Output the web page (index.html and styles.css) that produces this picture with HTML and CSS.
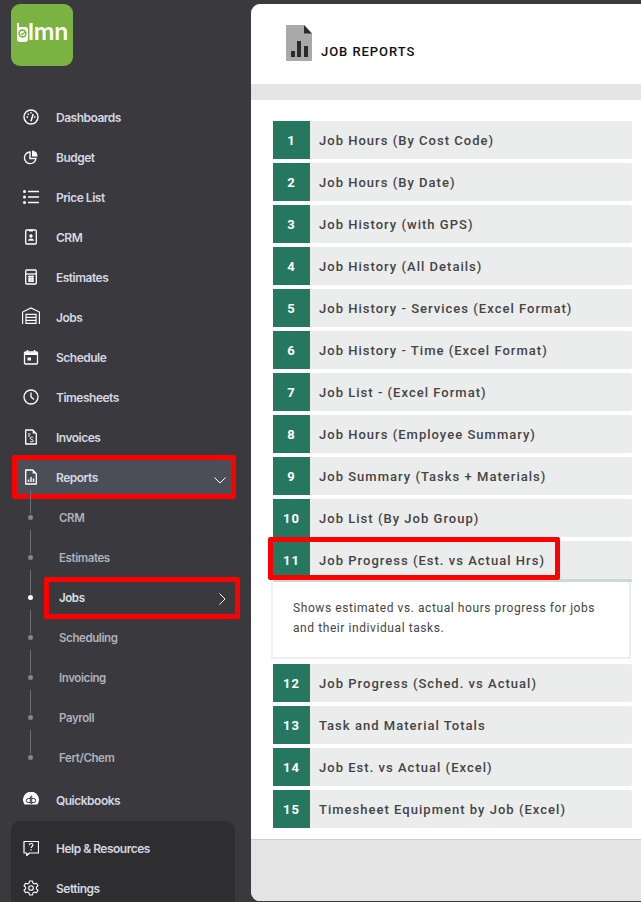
FILE: index.html
```html
<!DOCTYPE html>
<html lang="en">
<head>
<meta charset="utf-8">
<title>Job Reports</title>
<link rel="stylesheet" href="styles.css">
</head>
<body>
<aside class="sidebar">
  <div class="logo">
    <svg class="logo-mark" viewBox="0 0 11 19" width="11" height="19"><path d="M0 0h2v4h6a3 3 0 0 1 3 3v9a3 3 0 0 1-3 3H3a3 3 0 0 1-3-3z" fill="#fff"/><circle cx="5.5" cy="10.5" r="3.4" fill="none" stroke="#7ab342" stroke-width="1.6"/><path d="M4 10.5l1.3 1.2 2.6-2.6" fill="none" stroke="#7ab342" stroke-width="1.2"/></svg>
    <span class="logo-text">lmn</span>
  </div>
  <nav class="nav">
    <a class="item"><svg class="icon" viewBox="0 0 16 16"><circle cx="8" cy="8" r="7" fill="none" stroke="#fff" stroke-width="1.4"/><path d="M8 12.2 10.2 5" stroke="#fff" stroke-width="1.5"/><path d="M3.5 8h1.5M4.8 4.8l1 1M8 3v1.5M12.5 8H11" stroke="#fff" stroke-width="1.3"/></svg><span>Dashboards</span></a>
    <a class="item"><svg class="icon" viewBox="0 0 16 16"><path d="M7 3a5.8 5.8 0 1 0 6 6.5H7z" fill="none" stroke="#fff" stroke-width="1.4"/><path d="M9 1.5a5.8 5.8 0 0 1 5.6 6H9z" fill="#fff"/></svg><span>Budget</span></a>
    <a class="item"><svg class="icon" viewBox="0 0 16 16"><path d="M5 2.5h11M5 8h11M5 13.500h11" stroke="#fff" stroke-width="1.3"/><circle cx="1.500" cy="2.500" r="1.500" fill="#fff"/><circle cx="1.500" cy="8" r="1.500" fill="#fff"/><circle cx="1.500" cy="13.500" r="1.500" fill="#fff"/></svg><span>Price List</span></a>
    <a class="item"><svg class="icon" viewBox="0 0 16 16"><rect x="2.700" y="1" width="10.600" height="14" rx="1" fill="none" stroke="#fff" stroke-width="1.300"/><rect x="6" y="0.500" width="4" height="2" fill="#fff"/><circle cx="8" cy="7" r="1.700" fill="#fff"/><path d="M5 11.800c.4-3 5.600-3 6 0z" fill="#fff"/></svg><span>CRM</span></a>
    <a class="item"><svg class="icon" viewBox="0 0 16 16"><rect x="2.700" y="1" width="10.600" height="14" rx="1" fill="none" stroke="#fff" stroke-width="1.300"/><path d="M3 5h10" stroke="#fff" stroke-width="1.300"/><path d="M5 7.500h6M5 9.800h6M5 12.100h6M6.300 6.500v6.500M8 6.500v6.500M9.700 6.500v6.500" stroke="#fff" stroke-width="1.200"/></svg><span>Estimates</span></a>
    <a class="item"><svg class="icon icon-wide" viewBox="0 0 16 16"><path d="M.5 15V4.500L8 .8l7.500 3.700V15" fill="none" stroke="#fff" stroke-width="1.100"/><path d="M3.500 6.500h9v8h-9z" fill="none" stroke="#fff" stroke-width="1"/><path d="M3.500 9.200h9M3.500 11.900h9" stroke="#fff" stroke-width="1"/></svg><span>Jobs</span></a>
    <a class="item"><svg class="icon" viewBox="0 0 16 16"><path d="M2.500 3h11a1 1 0 0 1 1 1v10a1 1 0 0 1-1 1h-11a1 1 0 0 1-1-1V4a1 1 0 0 1 1-1z" fill="none" stroke="#fff" stroke-width="1.300"/><path d="M1.500 3.500h13V6h-13z" fill="#fff"/><path d="M4.500 1v3M11.500 1v3" stroke="#fff" stroke-width="1.500"/><rect x="4.500" y="8.500" width="3.500" height="3" fill="#fff"/></svg><span>Schedule</span></a>
    <a class="item"><svg class="icon" viewBox="0 0 16 16"><circle cx="8" cy="8" r="7" fill="none" stroke="#fff" stroke-width="1.300"/><path d="M8 3.500V8l3 2.500" fill="none" stroke="#fff" stroke-width="1.300"/></svg><span>Timesheets</span></a>
    <a class="item"><svg class="icon" viewBox="0 0 16 16"><path d="M2.700 1h7l3.600 3.600V15H2.700z" fill="none" stroke="#fff" stroke-width="1.300" stroke-linejoin="round"/><path d="M9.700 1v3.600h3.600" fill="#fff"/><path d="M5 5h2.500M5 7h2" stroke="#fff"/><path d="M10.200 8.700c-.5-.9-3-.9-3 .6 0 1.600 3.100.9 3.100 2.400 0 1.500-2.700 1.400-3.300.4" fill="none" stroke="#fff" stroke-width="1"/></svg><span>Invoices</span></a>
    <a class="item item-active"><svg class="icon" viewBox="0 0 16 16"><path d="M2.700 1h7l3.600 3.600V15H2.700z" fill="none" stroke="#fff" stroke-width="1.300" stroke-linejoin="round"/><path d="M9.700 1v3.600h3.600z" fill="#fff"/><path d="M5.500 10.500v2.500M8 8v5M10.500 9.500v3.500" stroke="#fff" stroke-width="1.400"/></svg><span>Reports</span><svg class="chev" viewBox="0 0 12 7" width="12" height="7"><path d="M.5.500 6 6l5.500-5.500" fill="none" stroke="#fff" stroke-width="1"/></svg></a>
    <div class="subnav">
      <a class="sub"><span>CRM</span></a>
      <a class="sub"><span>Estimates</span></a>
      <a class="sub sub-active"><span>Jobs</span><svg class="chev-right" viewBox="0 0 7 12" width="7" height="12"><path d="M.5.500 6 6 .5 11.500" fill="none" stroke="#fff" stroke-width="1"/></svg></a>
      <a class="sub"><span>Scheduling</span></a>
      <a class="sub"><span>Invoicing</span></a>
      <a class="sub"><span>Payroll</span></a>
      <a class="sub"><span>Fert/Chem</span></a>
    </div>
    <a class="item item-qb"><svg class="icon" viewBox="0 0 16 16"><path d="M1.600 12.500A8 8 0 1 1 14.400 12.500z" fill="#fff"/><path d="M7.300 4.500v7M7.300 6.500H5.300a2 2 0 0 0 0 4h2M8.700 12V3.500M8.700 6.500h2a2 2 0 0 1 0 4h-2" fill="none" stroke="#39393e" stroke-width="1"/></svg><span>Quickbooks</span></a>
  </nav>
  <div class="panel">
    <a class="item"><svg class="icon" viewBox="0 0 16 16"><path d="M1 1.500h14.500v11.500H6.500L3.800 15.500V13H1z" fill="none" stroke="#fff" stroke-width="1.200" stroke-linejoin="round"/><path d="M6.300 5.200c0-2.300 3.600-2.300 3.600-.2 0 1.500-1.800 1.500-1.800 3" fill="none" stroke="#fff" stroke-width="1.100"/><path d="M8.100 9.300v1.300" stroke="#fff" stroke-width="1.200"/></svg><span>Help &amp; Resources</span></a>
    <a class="item"><svg class="icon" viewBox="0 0 16 16"><path d="M6.500 1h3l.4 2 1.600.9 2-.7 1.500 2.600-1.600 1.300v1.800l1.600 1.300-1.500 2.600-2-.7-1.600.9-.4 2h-3l-.4-2-1.600-.9-2 .7L1 10.200l1.600-1.300V7.100L1 5.800l1.500-2.600 2 .7L6.100 3z" fill="none" stroke="#fff" stroke-width="1.100" stroke-linejoin="round"/><circle cx="8" cy="8" r="2.300" fill="none" stroke="#fff" stroke-width="1.100"/></svg><span>Settings</span></a>
  </div>
</aside>
<main class="main">
  <header class="header">
    <svg class="doc" viewBox="0 0 26 36" width="26" height="36"><path d="M1 0h17l8 8.500V35a1 1 0 0 1-1 1H1a1 1 0 0 1-1-1V1a1 1 0 0 1 1-1z" fill="#a9a9a9"/><path d="M18 0l8 8.500h-8z" fill="#2b2b2d"/><path d="M5 26h4v6H5zM11 16h4v16h-4zM18 21h4v11h-4z" fill="#2b2b2d"/></svg>
    <h1 class="title">JOB REPORTS</h1>
  </header>
  <div class="band"></div>
  <section class="reports">
    <div class="row"><b class="num">1</b><span class="label">Job Hours (By Cost Code)</span></div>
    <div class="row"><b class="num">2</b><span class="label">Job Hours (By Date)</span></div>
    <div class="row"><b class="num">3</b><span class="label">Job History (with GPS)</span></div>
    <div class="row"><b class="num">4</b><span class="label">Job History (All Details)</span></div>
    <div class="row"><b class="num">5</b><span class="label">Job History - Services (Excel Format)</span></div>
    <div class="row"><b class="num">6</b><span class="label">Job History - Time (Excel Format)</span></div>
    <div class="row"><b class="num">7</b><span class="label">Job List - (Excel Format)</span></div>
    <div class="row"><b class="num">8</b><span class="label">Job Hours (Employee Summary)</span></div>
    <div class="row"><b class="num">9</b><span class="label">Job Summary (Tasks + Materials)</span></div>
    <div class="row"><b class="num">10</b><span class="label">Job List (By Job Group)</span></div>
    <div class="open">
      <div class="row row-open"><b class="num">11</b><span class="label">Job Progress (Est. vs Actual Hrs)</span></div>
      <div class="desc">Shows estimated vs. actual hours progress for jobs and their individual tasks.</div>
    </div>
    <div class="row"><b class="num">12</b><span class="label">Job Progress (Sched. vs Actual)</span></div>
    <div class="row"><b class="num">13</b><span class="label">Task and Material Totals</span></div>
    <div class="row"><b class="num">14</b><span class="label">Job Est. vs Actual (Excel)</span></div>
    <div class="row"><b class="num">15</b><span class="label">Timesheet Equipment by Job (Excel)</span></div>
  </section>
  <div class="footer"></div>
</main>
</body>
</html>
```
FILE: styles.css
```css
* { box-sizing: border-box; }
*::before, *::after { box-sizing: border-box; }
html, body { height: 100%; }
body {
  margin: 0;
  display: flex;
  height: 902px;
  overflow: hidden;
  background: #39393e;
  font-family: Roboto, sans-serif;
}
.sidebar {
  width: 251px;
  flex: none;
  display: flex;
  flex-direction: column;
  padding-top: 4px;
}
.logo {
  width: 62px;
  height: 62px;
  flex: none;
  margin-left: 11px;
  border-radius: 9px;
  background: #7ab342;
  display: flex;
  align-items: center;
  padding: 0 0 0 6px;
}
.logo-mark { flex: none; margin-top: -5px; }
.logo-text {
  color: #fff;
  font: 600 23px/1 Inter, sans-serif;
  letter-spacing: -0.3px;
  margin-top: -6px;
}
.nav { margin-top: 31px; flex: none; }
.item {
  position: relative;
  display: flex;
  align-items: center;
  height: 40px;
  padding-left: 23px;
  color: #d3d8e2;
  font: 600 12px/1 Inter, sans-serif;
  letter-spacing: -0.5px;
}
.item span, .sub span { margin-top: 1px; }
.icon { width: 16px; height: 16px; flex: none; margin-right: 17px; }
.icon-wide { width: 18px; height: 18px; margin: -3px 16px 0 -1px; }
.item-active::before {
  content: "";
  position: absolute;
  left: 17px;
  right: 20px;
  top: 3px;
  bottom: 3px;
  background: #4b4e57;
}
.item-active > * { position: relative; }
.item-active::after {
  content: "";
  position: absolute;
  left: 12px;
  right: 15px;
  top: -2px;
  bottom: -2px;
  border: 5px solid #f00;
  border-radius: 2px;
}
.chev { position: absolute; left: 214px; top: 20px; }
.subnav { margin-top: 1px; }
.sub {
  position: relative;
  display: flex;
  align-items: center;
  height: 40px;
  padding-left: 59px;
  color: #aeb2ba;
  font: 600 11.500px/1 Inter, sans-serif;
  letter-spacing: -0.4px;
}
.sub::before {
  content: "";
  position: absolute;
  left: 30px;
  top: -8px;
  height: 24px;
  width: 1px;
  background: #6e6e73;
}
.sub::after {
  content: "";
  position: absolute;
  left: 28px;
  top: 17px;
  width: 5px;
  height: 5px;
  border-radius: 50%;
  background: #85858a;
}
.sub-active { color: #dfe2e8; }
.sub-active::after { background: #fff; }
.sub-active span::after {
  content: "";
  position: absolute;
  left: 44px;
  right: 11px;
  top: -1px;
  bottom: -1px;
  border: 5px solid #f00;
  border-radius: 2px;
}
.chev-right { position: absolute; left: 219px; top: 15px; }
.item-qb { margin-top: 2px; }
.panel {
  margin: 1px 16px 0 11px;
  padding: 7px 0 0;
  flex: 1;
  background: #2e2e30;
  border-radius: 9px 9px 0 0;
}
.panel .item { padding-left: 12px; }
.main {
  flex: 1;
  margin: 4px 0 1px;
  display: flex;
  flex-direction: column;
  background: #fff;
  border-radius: 9px 0 0 9px;
  overflow: hidden;
}
.header {
  height: 80px;
  flex: none;
  display: flex;
  align-items: flex-start;
  padding: 21px 0 0 35px;
}
.title {
  margin: 19px 0 0 9px;
  color: #111;
  font: 500 13px/16px Roboto, sans-serif;
  letter-spacing: .95px;
}
.band { height: 16px; flex: none; background: #e4e4e4; }
.reports {
  padding: 21px 9px 11px 22px;
  display: flex;
  flex-direction: column;
  gap: 4px;
}
.row {
  display: flex;
  align-items: center;
  height: 38px;
  background: #ebecec;
  border-radius: 0 2px 2px 0;
}
.num {
  width: 37px;
  height: 100%;
  flex: none;
  display: flex;
  align-items: center;
  justify-content: center;
  background: #26775f;
  color: #fff;
  font: 700 13px/1 Roboto, sans-serif;
  letter-spacing: 1px;
}
.label {
  margin-left: 9px;
  color: #444;
  font: 500 13px/1 Roboto, sans-serif;
  letter-spacing: 1.02px;
}
.open { margin-bottom: 1px; }
.row-open { position: relative; }
.row-open::before {
  content: "";
  position: absolute;
  left: 0;
  right: 0;
  bottom: -3px;
  height: 3px;
  background: #c8dcd6;
}
.row-open::after {
  content: "";
  position: absolute;
  left: -5px;
  top: -4px;
  width: 292px;
  bottom: -1px;
  border: 5px solid #f00;
  border-radius: 2px;
}
.desc {
  margin: 3px 1px 0 -2px;
  height: 77px;
  padding: 17px 20px 0;
  border: 2px solid #eee;
  border-top: 0;
  color: #444;
  font: 400 12px/19.500px Roboto, sans-serif;
  letter-spacing: .58px;
}
.footer {
  flex: 1;
  background: #e4e4e4;
  border-top: 1px solid #cfcfcf;
}
```
